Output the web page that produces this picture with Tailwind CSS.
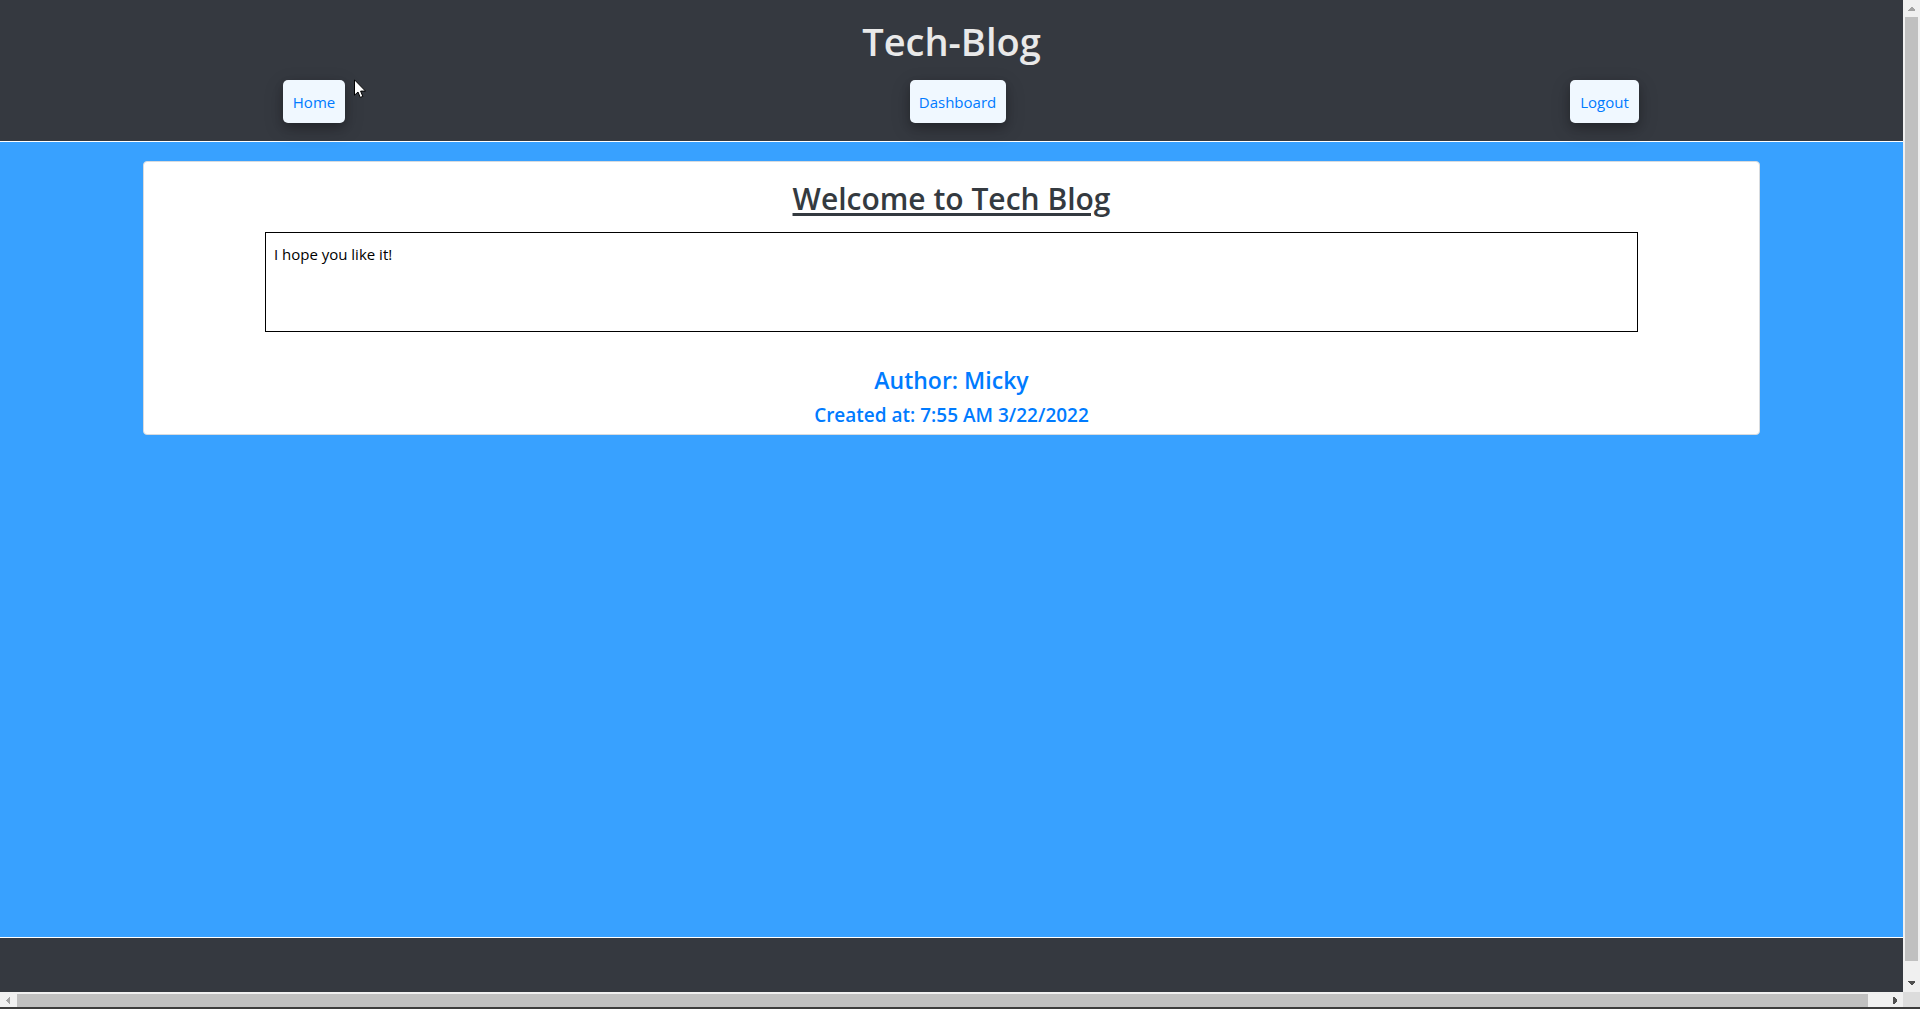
<!DOCTYPE html>
<html lang="en">
<head>
<meta charset="utf-8">
<meta name="viewport" content="width=device-width, initial-scale=1">
<title>Tech-Blog</title>
<script src="https://cdn.jsdelivr.net/npm/@tailwindcss/browser@4"></script>
</head>
<body class="flex h-screen flex-col overflow-hidden bg-[#3c3c3c] pb-[2px] font-['Segoe_UI','Open_Sans','Noto_Sans',sans-serif] text-base text-[#212529]">
  <div class="flex min-h-0 flex-1">
    <div class="flex min-w-0 flex-1 flex-col bg-[#38a1ff]">
      <header class="relative flex h-[142px] shrink-0 flex-col border-b border-white bg-[#353940] pt-4">
        <h1 class="text-center text-[38px] leading-[50px] font-semibold text-[#e9e9e9]">Tech-Blog</h1>
        <nav class="mt-[14px] flex justify-between pr-[264px] pl-[283px] text-[15px] leading-6 text-[#007bff]">
          <a href="#" class="flex h-[43px] w-[62px] items-center justify-center rounded-[5px] bg-[#f0f8ff] shadow-[0_4px_8px_0_rgba(0,0,0,0.2),0_6px_20px_0_rgba(0,0,0,0.19)]">Home</a>
          <a href="#" class="flex h-[43px] w-[96px] items-center justify-center rounded-[5px] bg-[#f0f8ff] shadow-[0_4px_8px_0_rgba(0,0,0,0.2),0_6px_20px_0_rgba(0,0,0,0.19)]">Dashboard</a>
          <a href="#" class="flex h-[43px] w-[69px] items-center justify-center rounded-[5px] bg-[#f0f8ff] shadow-[0_4px_8px_0_rgba(0,0,0,0.2),0_6px_20px_0_rgba(0,0,0,0.19)]">Logout</a>
        </nav>
        <!-- mouse pointer -->
        <svg class="absolute top-[79px] left-[354px] h-5 w-3" viewBox="0 0 12 20" aria-hidden="true"><path d="M.5 .8v15.4l3.5-3.2 2.2 5.4 2.6-1-2.2-5.3h4.9z" fill="#fff" stroke="#000"/></svg>
      </header>
      <main class="flex-1 pt-[19px]">
        <article class="mx-auto flex h-[274px] w-[85%] flex-col items-center rounded border border-[#d7dbdf] bg-white text-center">
          <h2 class="mt-4 text-[30px] leading-[42px] font-semibold text-[#343a40] underline decoration-[3px] underline-offset-[3px]">Welcome to Tech Blog</h2>
          <div class="mt-3 h-[100px] w-[85%] border border-black px-2 py-[9px] text-left text-[15px] leading-6 text-black">I hope you like it!</div>
          <h3 class="mt-8 text-[23px] leading-8 font-semibold text-[#007bff]">Author: Micky</h3>
          <h4 class="mt-1 text-[19px] leading-[30px] font-semibold text-[#007bff]">Created at: 7:55 AM 3/22/2022</h4>
        </article>
      </main>
      <footer class="h-[55px] shrink-0 border-t border-white bg-[#353940]"></footer>
    </div>
    <!-- vertical scroll bar -->
    <div class="flex w-[17px] shrink-0 flex-col bg-[#f0f0f0] pr-[2px] pl-[2px]" aria-hidden="true">
      <svg class="h-[17px] w-[13px] shrink-0" viewBox="0 0 13 17" shape-rendering="crispEdges"><path d="M3 11V10L6 7h1l3 3v1z" fill="#a3a3a3"/></svg>
      <div class="flex-1 bg-[#c0c0c0]"></div>
      <svg class="h-[31px] w-[13px] shrink-0" viewBox="0 0 13 31" shape-rendering="crispEdges"><path d="M3 20v1l3 3h1l3-3v-1z" fill="#505050"/></svg>
    </div>
  </div>
  <!-- horizontal scroll bar -->
  <div class="flex h-[15px] shrink-0 bg-[#f0f0f0]" aria-hidden="true">
    <svg class="h-[15px] w-[17px] shrink-0" viewBox="0 0 17 15" shape-rendering="crispEdges"><path d="M10 5H9L6 8v1l3 3h1z" fill="#a3a3a3"/></svg>
    <div class="mt-[2px] flex-1 bg-[#c0c0c0]"></div>
    <svg class="h-[15px] w-[35px] shrink-0" viewBox="0 0 35 15" shape-rendering="crispEdges"><path d="M25 5h1l3 3v1l-3 3h-1z" fill="#505050"/></svg>
    <div class="w-[17px] bg-[#dcdcdc]"></div>
  </div>
</body>
</html>
